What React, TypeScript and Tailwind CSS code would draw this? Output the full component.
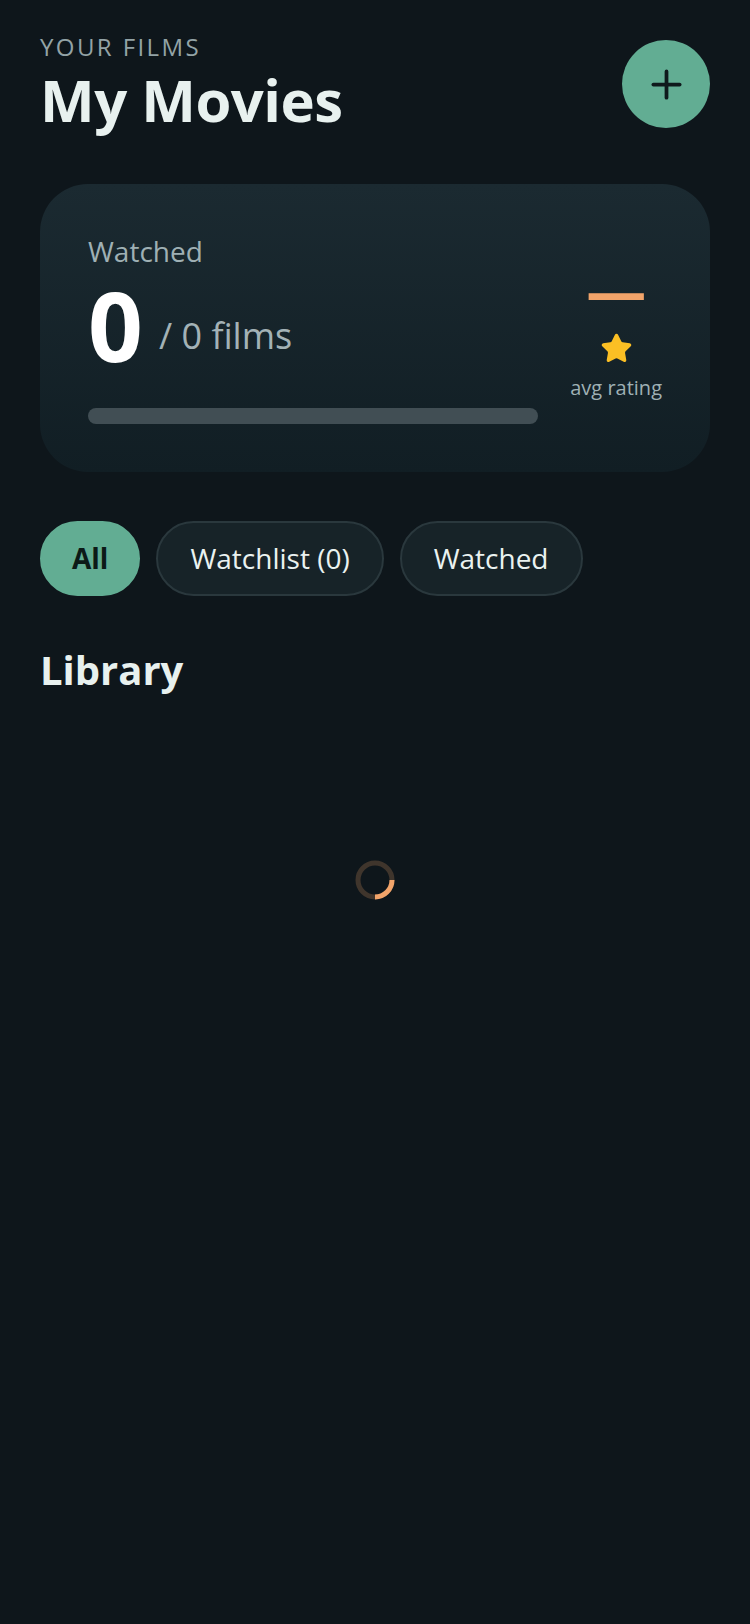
import { Plus, Star } from 'lucide-react'

const filters = [
  { key: 'all', label: 'All' },
  { key: 'watchlist', label: 'Watchlist (0)' },
  { key: 'watched', label: 'Watched' },
]

function Spinner() {
  return (
    <svg width="40" height="40" viewBox="0 0 40 40">
      <circle cx="20" cy="20" r="17" fill="none" stroke="#f2a46a" strokeOpacity="0.22" strokeWidth="5" />
      <path d="M37 20 A17 17 0 0 1 20 37" fill="none" stroke="#f2a46a" strokeWidth="5" />
    </svg>
  )
}

export default function App() {
  const active = 'all'

  return (
    <div className="min-h-screen bg-[#0e161b] px-10 pt-8 font-['Open_Sans',sans-serif] text-[#e8f1ef]">
      <header className="flex items-start justify-between">
        <div>
          <p className="text-[24px] leading-[29px] tracking-[0.1em] text-[#93a3a6]">YOUR FILMS</p>
          <h1 className="mt-[7px] text-[58px] font-bold leading-[64px] tracking-[-0.5px]">My Movies</h1>
        </div>
        <button className="mt-2 flex h-[88px] w-[88px] items-center justify-center rounded-full bg-[#62ad93] text-[#0f1a1c]">
          <Plus size={45} strokeWidth={2} />
        </button>
      </header>

      <section className="mt-[52px] flex items-center gap-8 rounded-[48px] bg-gradient-to-b from-[#1b2a31] to-[#111e24] p-12">
        <div className="flex-1">
          <p className="text-[28px] leading-[38px] text-[#9fb0b4]">Watched</p>
          <div className="mt-[7px] flex items-end">
            <span className="text-[96px] font-bold leading-none text-white">0</span>
            <span className="ml-4 pb-[19px] text-[36px] leading-none text-[#a3b2b6]">/ 0 films</span>
          </div>
          <div className="mt-[35px] h-4 rounded-full bg-[#414e54]" />
        </div>
        <div className="mt-[6px] flex flex-col items-center">
          <span className="text-[60px] font-bold leading-none text-[#f2a46a]">—</span>
          <Star size={33} strokeWidth={1.5} fill="#fbbf24" color="#fbbf24" className="mt-[12px]" />
          <span className="mt-[9px] text-[20px] leading-[28px] text-[#9fb0b4]">avg rating</span>
        </div>
      </section>

      <nav className="mt-[49px] flex gap-4">
        {filters.map((f) =>
          f.key === active ? (
            <button
              key={f.key}
              className="rounded-full border-2 border-[#62ad93] bg-[#62ad93] px-[30px] py-[17px] text-[28px] font-bold leading-[37px] text-[#0c1a17]"
            >
              {f.label}
            </button>
          ) : (
            <button
              key={f.key}
              className="rounded-full border-2 border-[#2a383d] bg-[#172328] px-8 py-[17px] text-[28px] leading-[37px] text-[#eaf2f0]"
            >
              {f.label}
            </button>
          ),
        )}
      </nav>

      <h2 className="mt-[50px] text-[40px] font-bold leading-[48px]">Library</h2>

      <div className="mt-[166px] flex justify-center">
        <Spinner />
      </div>
    </div>
  )
}
